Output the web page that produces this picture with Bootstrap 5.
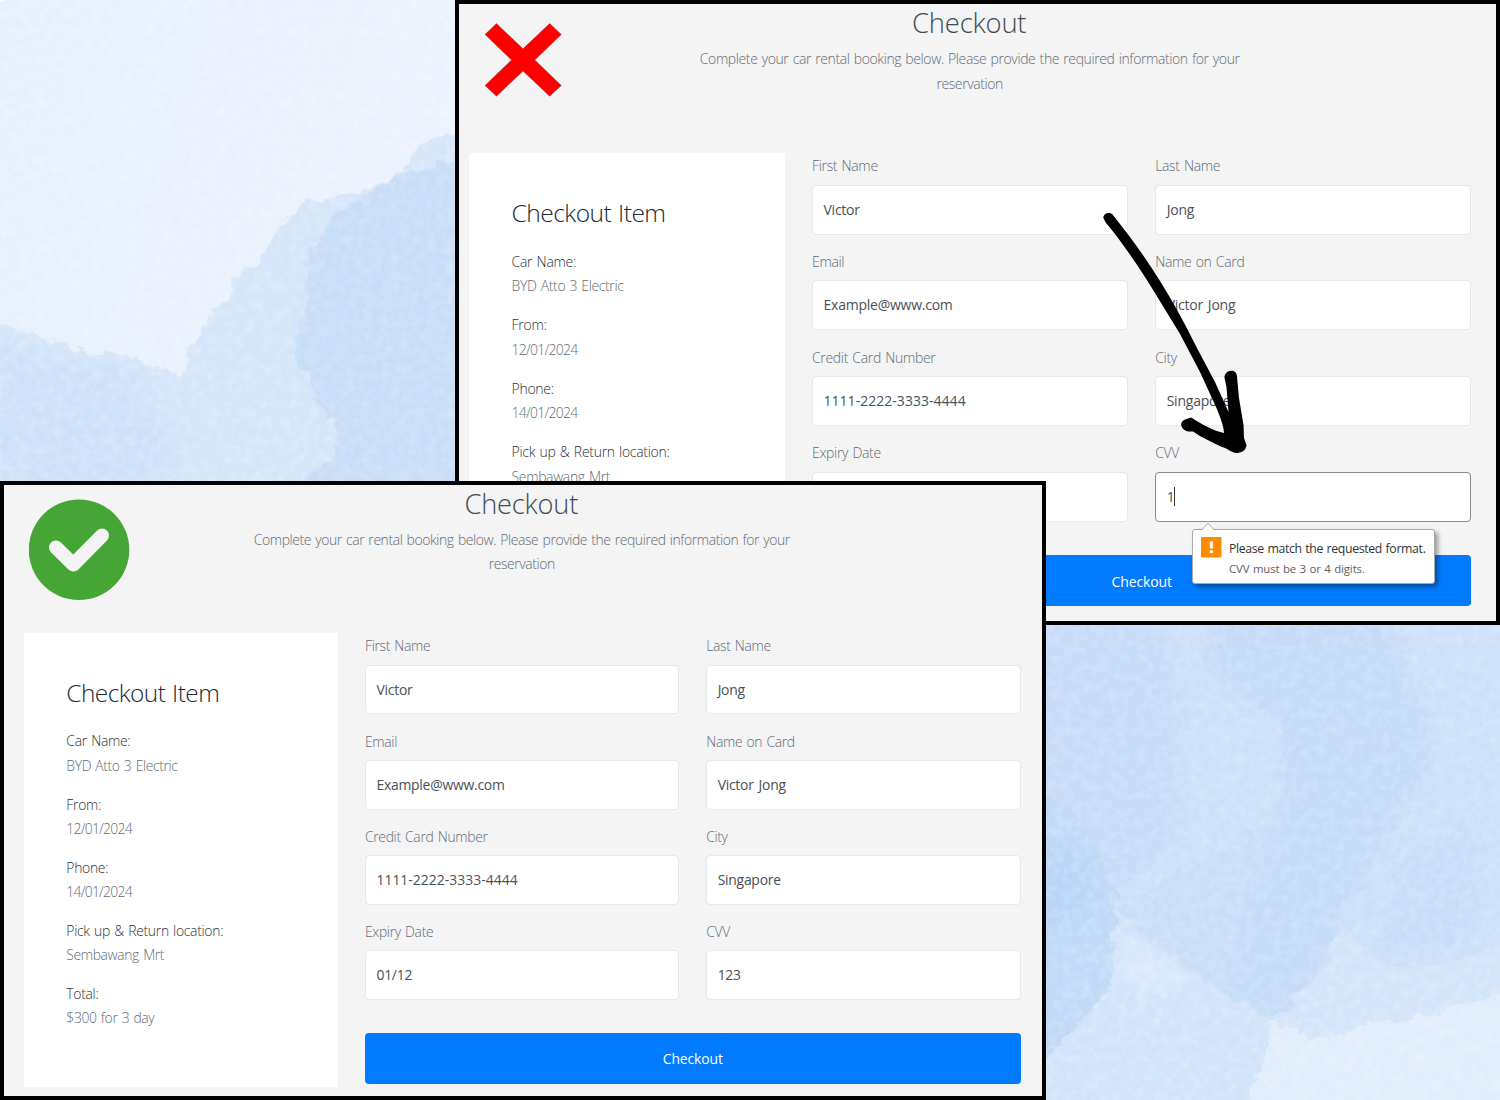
<!DOCTYPE html>
<html lang="en">
<head>
<meta charset="utf-8">
<meta name="viewport" content="width=device-width, initial-scale=1">
<title>Checkout validation</title>
<link href="https://cdn.jsdelivr.net/npm/bootstrap@5.3.0/dist/css/bootstrap.min.css" rel="stylesheet">
<style>
body{width:1500px;height:1100px;overflow:hidden;background:#d2e4f9;font-family:"Open Sans","Noto Sans",sans-serif;position:relative}
.wash{position:absolute;left:0;top:0}
.shot{--u:1px;position:absolute;border:4px solid #000;background:#f4f4f4;overflow:hidden;color:#626b74;font-weight:300;font-size:calc(14*var(--u));line-height:calc(24.6*var(--u));letter-spacing:-.38px;word-spacing:1px}
.shot-bad{left:455px;top:0;width:1045px;height:625px;padding-left:10px}
.shot-good{--u:.9942px;left:0;top:481px;width:1046px;height:619px;padding-left:20px}
.inner{width:calc(1002.4*var(--u))}
.heading{font-size:calc(27.4*var(--u));line-height:38px;font-weight:300;color:#3f4b57;margin:0 0 5px;letter-spacing:-.2px;position:relative;left:-1px;top:-.5px}
.intro{height:calc(106*var(--u));letter-spacing:-.4px;position:relative;left:-.5px}
.cols{gap:calc(27*var(--u))}
.summary{width:calc(316*var(--u));height:calc(456.500*var(--u));padding:calc(40*var(--u)) calc(42.6*var(--u)) 0;flex:none}
.summary h3{font-size:calc(24.6*var(--u));line-height:calc(40*var(--u));font-weight:300;color:#222a31;margin:0 0 calc(16.6*var(--u));letter-spacing:-.55px}
.item{margin-bottom:calc(14.3*var(--u))}
.item strong{display:block;font-weight:300;color:#2c3136;letter-spacing:-.3px}
.digits{letter-spacing:-.75px}
.fields{display:grid;grid-template-columns:1fr 1fr;column-gap:calc(27*var(--u));row-gap:calc(14.3*var(--u))}
.fields label{display:block;line-height:calc(26.5*var(--u));margin-bottom:calc(5*var(--u));letter-spacing:-.33px}
.fields .form-control{height:calc(50*var(--u));border:1px solid #e7e8e9;border-radius:4px;padding:0 calc(10.5*var(--u));font-size:calc(14*var(--u));line-height:calc(48.5*var(--u));color:#495057;font-weight:400;letter-spacing:-.24px;word-spacing:1.5px}
.fields .card-no{letter-spacing:.03px}
.fields .active-field{border-color:#8b8b8b;display:flex;align-items:center}
.caret{width:1px;height:19px;background:#333;margin-left:-.5px}
.pay{width:100%;height:calc(51.6*var(--u));margin-top:calc(33*var(--u));background:#007bff;border:0;border-radius:4px;color:#fff;font-size:calc(14*var(--u));letter-spacing:-.1px;padding:1px 0 0}
.icon-mark{position:absolute}
.tip{position:absolute;left:1192px;top:529px;width:243px;height:55px;background:#fff;border:1px solid #a9a9a9;border-radius:3px;box-shadow:3px 3px 5px rgba(0,0,0,.38);padding:7px 0 0 8px;gap:7px;color:#333}
.tip svg{flex:none}
.tip-title{font-size:12.3px;line-height:23px;letter-spacing:-.35px;word-spacing:.7px;white-space:nowrap}
.tip-note{font-size:11.4px;line-height:18px;letter-spacing:-.1px;word-spacing:.6px;color:#606060}
.over{position:absolute;left:0;top:0;pointer-events:none}
</style>
<script src="https://cdn.jsdelivr.net/npm/bootstrap@5.3.0/dist/js/bootstrap.bundle.min.js"></script>
</head>
<body>
<svg class="wash" width="1500" height="1100" viewBox="0 0 1500 1100" aria-hidden="true">
  <defs>
    <filter id="rough" x="0" y="0" width="1500" height="1100" filterUnits="userSpaceOnUse" color-interpolation-filters="sRGB"><feTurbulence type="fractalNoise" baseFrequency=".07" numOctaves="4" seed="4"/><feDisplacementMap in="SourceGraphic" scale="18" xChannelSelector="R" yChannelSelector="G"/><feGaussianBlur stdDeviation=".7"/></filter>
    <filter id="soft" x="0" y="0" width="1500" height="1100" filterUnits="userSpaceOnUse" color-interpolation-filters="sRGB"><feTurbulence type="fractalNoise" baseFrequency=".06" numOctaves="4" seed="9" result="n"/><feGaussianBlur in="SourceGraphic" stdDeviation="7"/><feDisplacementMap in2="n" scale="34" xChannelSelector="R" yChannelSelector="G"/></filter>
    <filter id="grain" x="0" y="0" width="1500" height="1100" filterUnits="userSpaceOnUse" color-interpolation-filters="sRGB"><feTurbulence type="fractalNoise" baseFrequency=".11" numOctaves="5" seed="2"/><feColorMatrix values="0 0 0 0 1  0 0 0 0 1  0 0 0 0 1  .8 0 0 0 -.3"/></filter>
    <linearGradient id="pale" x1="0" y1="0" x2="1" y2=".3"><stop offset="0" stop-color="#e5effc"/><stop offset="1" stop-color="#ecf2fd"/></linearGradient>
  </defs>
  <rect width="460" height="485" fill="url(#pale)"/>
  <path filter="url(#rough)" fill="#fff" d="M-20-20H22L0 9H-20Z"/>
  <path filter="url(#rough)" fill="#d5e6f9" d="M-20 318L30 333 60 343 95 355 125 354 150 368 184 374 190 345 207 322 212 312 230 300 233 277 255 262 268 245 286 220 295 203 330 198 360 193 385 182 404 170 415 145 480 122V520H-20Z"/>
  <path filter="url(#soft)" fill="#cfe1f9" d="M-20 338L60 358 140 372 150 410 175 440 150 520H-20Z"/>
  <path filter="url(#rough)" fill="#c8ddf7" d="M480 166L435 166 400 175 360 200 330 215 318 245 305 270 308 300 297 335 297 365 310 375 312 400 335 420 338 445 325 465 290 485 480 520Z"/>
  <g>
  <rect x="1040" y="620" width="460" height="480" fill="#cde1f9"/>
  <path filter="url(#soft)" fill="#c6dbf7" d="M1030 600H1155L1173 660 1176 720 1173 790 1178 830 1140 870 1115 890 1030 860Z"/>
  <path filter="url(#soft)" fill="#c3d9f6" d="M1210 600H1385L1402 660 1405 690 1420 700 1425 740 1428 770 1400 810 1380 840 1370 865 1340 900 1330 945 1300 995 1275 1015 1230 995 1250 900 1290 790 1280 720 1210 670Z"/>
  <path filter="url(#rough)" fill="#c5dbf7" fill-opacity=".5" d="M1390 600L1402 660 1405 690 1420 700 1425 740 1428 770 1400 810 1380 840 1370 865 1340 900 1330 945 1300 995 1275 1024 1230 998 1170 960 1120 910 1180 870 1260 830 1310 740 1230 680 1205 600Z"/>
  <path filter="url(#soft)" fill="#c8ddf8" d="M1400 860L1480 830 1470 940 1380 955Z"/>
  <path filter="url(#rough)" fill="#c0d9f7" d="M1030 785L1080 815 1105 870 1118 905 1112 985 1080 1025 1030 1080Z"/>
  <path filter="url(#soft)" fill="#b8d5f5" d="M1030 850H1080L1100 885 1090 920 1030 935Z"/>
  <path filter="url(#rough)" fill="#d2e4fa" d="M1116 905L1130 925 1170 960 1230 995 1275 1022V1120H1020V1082L1080 1025 1112 985Z"/>
  <path filter="url(#soft)" fill="#d9e8fa" d="M1122 930L1155 950 1200 985 1150 1000 1116 975Z"/>
  <path filter="url(#rough)" fill="#d4e5f9" d="M1335 937L1350 935 1370 955 1400 965 1460 960 1520 940V1040H1260L1330 960Z"/>
  <path filter="url(#rough)" fill="#e1edfb" d="M1270 1022L1290 1030 1325 1038 1370 1022 1430 1015 1520 990V1120H1240L1268 1045Z"/>
  </g>
  <rect width="1500" height="1100" filter="url(#grain)" opacity=".6"/>
</svg>

<section class="shot shot-bad">
  <div class="inner">
    <header class="text-center"><h2 class="heading">Checkout</h2>
      <p class="intro mb-0">Complete your car rental booking below. Please provide the required information for your<br>reservation</p></header>
    <div class="cols d-flex align-items-start">
      <aside class="summary bg-white"><h3>Checkout Item</h3>
        <div class="item"><strong>Car Name:</strong>BYD Atto 3 Electric</div>
        <div class="item"><strong>From:</strong><span class="digits">12/01/2024</span></div>
        <div class="item"><strong>Phone:</strong><span class="digits">14/01/2024</span></div>
        <div class="item"><strong>Pick up &amp; Return location:</strong>Sembawang Mrt</div>
      </aside>
      <form class="flex-grow-1">
        <div class="fields">
          <div><label>First Name</label><div class="form-control">Victor</div></div>
          <div><label>Last Name</label><div class="form-control">Jong</div></div>
          <div><label>Email</label><div class="form-control">Example@www.com</div></div>
          <div><label>Name on Card</label><div class="form-control">Victor Jong</div></div>
          <div><label>Credit Card Number</label><div class="form-control card-no">1111-2222-3333-4444</div></div>
          <div><label>City</label><div class="form-control">Singapore</div></div>
          <div><label>Expiry Date</label><div class="form-control"></div></div>
          <div><label>CVV</label><div class="form-control active-field">1<span class="caret"></span></div></div>
        </div>
        <button type="button" class="btn btn-primary pay">Checkout</button>
      </form>
    </div>
  </div>
</section>

<svg class="over" width="1500" height="620" viewBox="0 0 1500 620" aria-hidden="true">
  <path fill="red" stroke="#733" stroke-width=".4" d="M485 34.5L496.5 23.5 523 48.8 549.7 23.5 561.3 34.5 534.8 60 561.3 85.5 549.7 96.2 523 71 496.5 96.2 485 85.5 511.5 60Z"/>
  <path d="M1103.4 218C1103 214 1109 211 1112.500 214.500C1130 236 1147 260 1160 281C1175 305 1187 328 1198 350L1215 382L1228.500 412L1226.500 387L1224.500 378C1224 369 1237 368 1237 376.500L1239 398L1243.500 425L1244 438L1246.500 445C1246 451 1241 453 1236 453C1230 452 1227 448 1222 447C1212 442 1202 438 1193 431.500L1188 431.500C1180 429 1179 422 1185 419.500L1191 417.500L1196 420.500C1205 426 1214 431 1224 433C1224 426 1219 414 1216 407L1200 372L1180 334L1158 298C1140 268 1122 242 1106 223Z"/>
</svg>

<div class="tip d-flex">
  <svg width="21" height="21" viewBox="0 0 21 21"><rect width="20.500" height="20.500" rx="1" fill="#ff8c00"/><path fill="#fff" d="M8.700 4.500H12L11.700 11.500H9ZM8.800 13.300H11.900V16H8.800Z"/></svg>
  <div><div class="tip-title">Please match the requested format.</div><div class="tip-note">CVV must be 3 or 4 digits.</div></div>
</div>
<svg class="over" width="1500" height="620" viewBox="0 0 1500 620" aria-hidden="true"><path d="M1201.500 530.500L1208 523 1214.500 530.500" fill="#fff" stroke="#b0b0b0"/></svg>

<section class="shot shot-good">
  <svg class="icon-mark" style="left:25px;top:14px" width="101" height="102" viewBox="29 499 101 102" aria-hidden="true"><circle cx="79" cy="549.700" r="50.300" fill="#46a635"/><path d="M56 547.500L73.400 564.500 102 535.500" fill="none" stroke="#f4f4f4" stroke-width="14" stroke-linecap="round" stroke-linejoin="round"/></svg>
  <div class="inner">
    <header class="text-center"><h2 class="heading">Checkout</h2>
      <p class="intro mb-0">Complete your car rental booking below. Please provide the required information for your<br>reservation</p></header>
    <div class="cols d-flex align-items-start">
      <aside class="summary bg-white"><h3>Checkout Item</h3>
        <div class="item"><strong>Car Name:</strong>BYD Atto 3 Electric</div>
        <div class="item"><strong>From:</strong><span class="digits">12/01/2024</span></div>
        <div class="item"><strong>Phone:</strong><span class="digits">14/01/2024</span></div>
        <div class="item"><strong>Pick up &amp; Return location:</strong>Sembawang Mrt</div>
        <div class="item"><strong>Total:</strong>$300 for 3 day</div>
      </aside>
      <form class="flex-grow-1">
        <div class="fields">
          <div><label>First Name</label><div class="form-control">Victor</div></div>
          <div><label>Last Name</label><div class="form-control">Jong</div></div>
          <div><label>Email</label><div class="form-control">Example@www.com</div></div>
          <div><label>Name on Card</label><div class="form-control">Victor Jong</div></div>
          <div><label>Credit Card Number</label><div class="form-control card-no">1111-2222-3333-4444</div></div>
          <div><label>City</label><div class="form-control">Singapore</div></div>
          <div><label>Expiry Date</label><div class="form-control">01/12</div></div>
          <div><label>CVV</label><div class="form-control">123</div></div>
        </div>
        <button type="button" class="btn btn-primary pay">Checkout</button>
      </form>
    </div>
  </div>
</section>
</body>
</html>
